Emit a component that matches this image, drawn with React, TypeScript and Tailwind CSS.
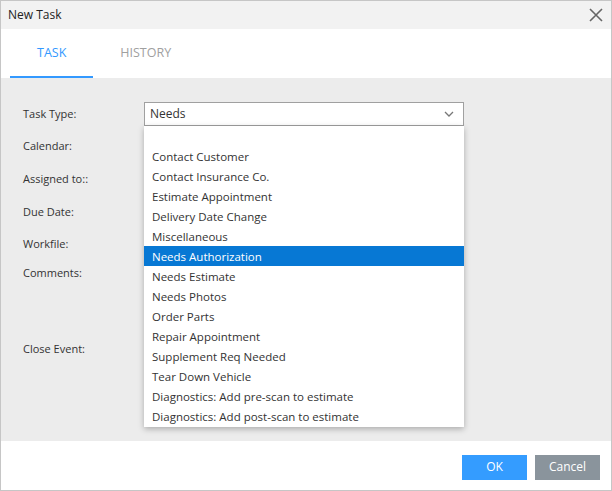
const labels: { text: string; h: string }[] = [
  { text: 'Task Type:', h: 'h-[24px]' },
  { text: 'Calendar:', h: 'h-[40px]' },
  { text: 'Assigned to::', h: 'h-[26px]' },
  { text: 'Due Date:', h: 'h-[40px]' },
  { text: 'Workfile:', h: 'h-[24px]' },
  { text: 'Comments:', h: 'h-[34px]' },
  { text: '', h: 'h-[42px]' },
  { text: 'Close Event:', h: 'h-[34px]' },
];

const options = [
  '',
  'Contact Customer',
  'Contact Insurance Co.',
  'Estimate Appointment',
  'Delivery Date Change',
  'Miscellaneous',
  'Needs Authorization',
  'Needs Estimate',
  'Needs Photos',
  'Order Parts',
  'Repair Appointment',
  'Supplement Req Needed',
  'Tear Down Vehicle',
  'Diagnostics: Add pre-scan to estimate',
  'Diagnostics: Add post-scan to estimate',
];

function App() {
  const selected = 'Needs Authorization';

  return (
    <div className="w-[612px] h-[491px] border border-[#c6c6c6] flex flex-col bg-white text-[#333] font-['Open_Sans',sans-serif] overflow-hidden">
      {/* title bar */}
      <div className="h-[28px] shrink-0 bg-[#f2f2f2] flex items-center justify-between pl-[7px] pr-[8px]">
        <span className="text-[12px] text-[#222]">New Task</span>
        <svg width="14" height="14" viewBox="0 0 14 14" className="text-[#666]">
          <path d="M1 1 L13 13 M13 1 L1 13" stroke="currentColor" strokeWidth="1.6" fill="none" />
        </svg>
      </div>

      {/* tabs */}
      <div className="h-[49px] shrink-0 bg-white flex items-end pl-[9px]">
        <div className="h-full px-[27px] flex items-center border-b-2 border-[#3399ff] text-[12.5px] text-[#3399ff] pt-[2px]">
          TASK
        </div>
        <div className="h-full px-[27px] flex items-center border-b-2 border-transparent text-[12.5px] text-[#a0a0a0] pt-[2px]">
          HISTORY
        </div>
      </div>

      {/* form */}
      <div className="flex-1 bg-[#ececec] pt-[24px] pl-[22px]">
        <div className="flex">
          <div className="w-[121px] flex flex-col">
            {labels.map((l, i) => (
              <div key={i} className={`${l.h} flex items-center text-[11px] text-[#333]`}>
                {l.text}
              </div>
            ))}
          </div>
          <div className="relative w-[320px] h-[24px]">
            <div className="h-full border border-[#a0a0a0] bg-white flex items-center justify-between pl-[5px] pr-[9px]">
              <span className="text-[12px] text-[#333]">Needs</span>
              <svg width="10" height="6" viewBox="0 0 10 6" className="text-[#777]">
                <path d="M1 1 L5 5 L9 1" stroke="currentColor" strokeWidth="1.3" fill="none" />
              </svg>
            </div>
            <div className="absolute left-0 top-full w-[320px] bg-white pb-[1px] shadow-[0_2px_6px_rgba(0,0,0,0.28)] z-10">
              {options.map((o, i) => (
                <div
                  key={i}
                  className={
                    o === selected
                      ? 'h-[20px] flex items-center pl-[8px] pt-[1px] text-[11.5px] bg-[#0778d4] text-white'
                      : 'h-[20px] flex items-center pl-[8px] pt-[1px] text-[11.5px] text-[#333]'
                  }
                >
                  {o}
                </div>
              ))}
            </div>
          </div>
        </div>
      </div>

      {/* footer */}
      <div className="h-[49px] shrink-0 bg-white flex items-center justify-end gap-[8px] pr-[11px] pt-[3px]">
        <button className="w-[65px] h-[25px] bg-[#349cff] text-white text-[12px]">OK</button>
        <button className="w-[65px] h-[25px] bg-[#8a949c] text-white text-[12px]">Cancel</button>
      </div>
    </div>
  );
}

export default App;
